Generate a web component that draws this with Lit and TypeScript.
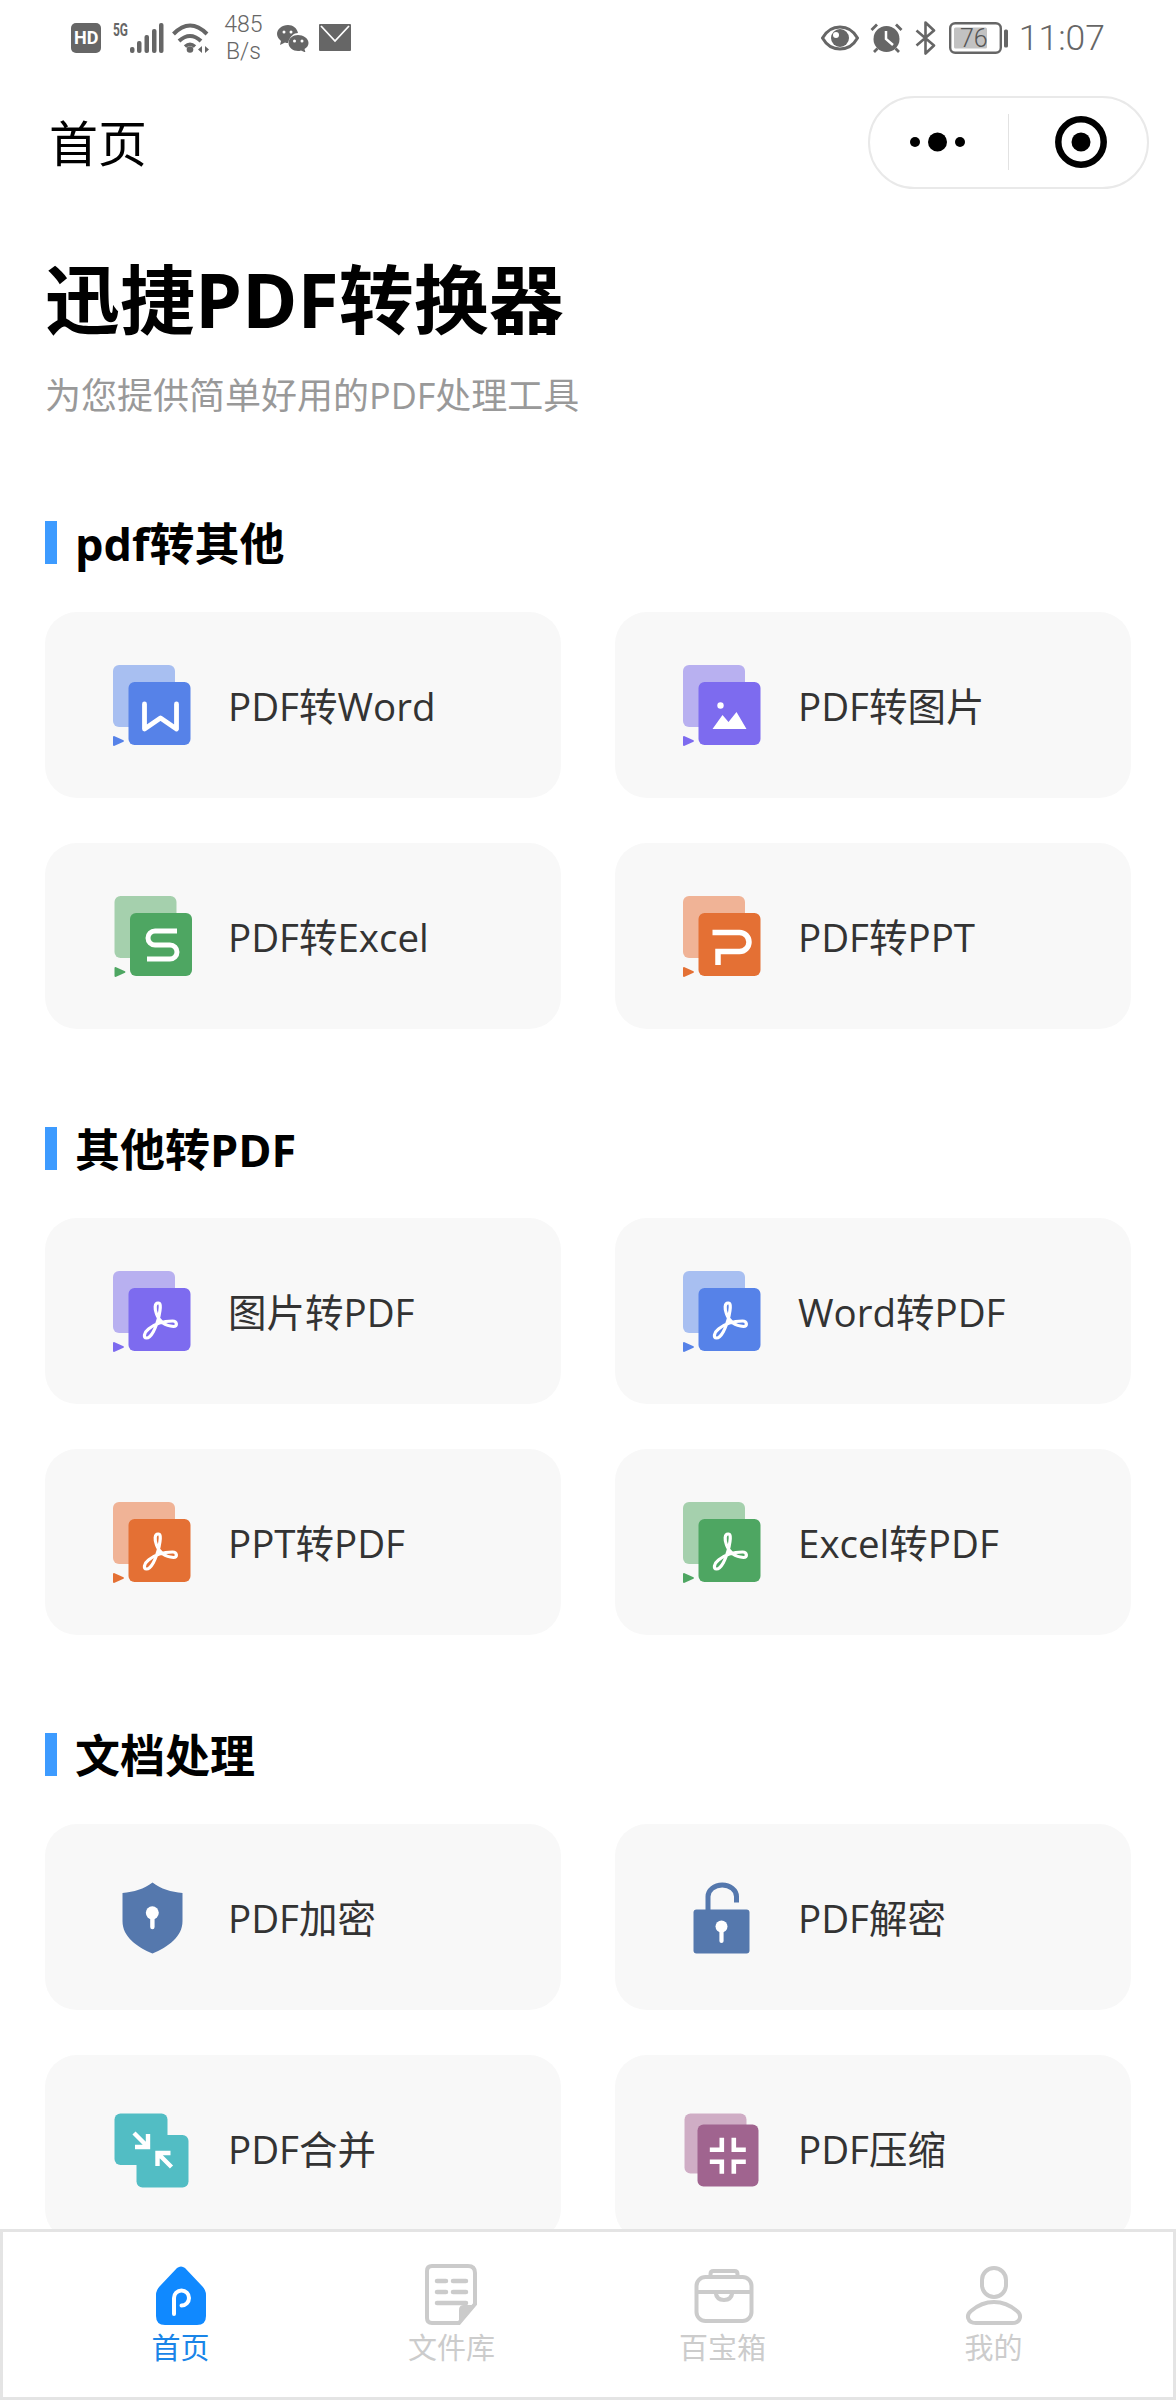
import { LitElement, html, css, svg } from "lit";
import { customElement } from "lit/decorators.js";

const PAL: Record<string, [string, string]> = {
  blue: ["#5682e8", "#a8bff1"],
  purple: ["#7d6bef", "#b8b0f0"],
  green: ["#4ea662", "#a5d0ad"],
  orange: ["#e47034", "#f0b396"],
};

const GLYPH: Record<string, any> = {
  w: svg`<path d="M16 22V47L32 36L48 47V22" fill="none" stroke="#fff" stroke-width="4.800" stroke-linejoin="round" stroke-linecap="round"/>`,
  s: svg`<path d="M47 18H25a7 7 0 0 0 0 14H40a7 7 0 0 1 0 14H17" fill="none" stroke="#fff" stroke-width="5"/>`,
  p: svg`<path d="M14 19.500H41a9.500 9.500 0 0 1 0 19H19.500V52" fill="none" stroke="#fff" stroke-width="5.500"/>`,
  img: svg`<circle cx="22" cy="23.500" r="3.200" fill="#fff"/><path d="M14 47L24 33L30 40L38 30L48 47Z" fill="#fff"/>`,
  pdf: svg`<path d="M29.500 15c-3.500 0-3.500 6-1.500 11c3 8 8 12 17 12.500c4.500 0 3.500-5.500-1-5.500c-9 0-18 3-24 8c-4.500 3.500-5.500 9-2 9c4.500 0 9.500-9.500 12.500-22c1-5 2.500-13-.5-13Z" fill="none" stroke="#fff" stroke-width="3.200" stroke-linejoin="round"/>`,
};

function stacked(color: string, glyph: string, dx = 0) {
  const [front, back] = PAL[color];
  return html`<svg class="ic" width="80" height="82" viewBox="${-dx} 0 80 82">
    <rect x="0" y="0" width="62" height="62" rx="6" fill=${back}/>
    <path d="M1 71L10.500 75.200Q11.500 76 10.500 76.800L1 81Q0 81 0 80V72Q0 71 1 71Z" fill=${front}/>
    <g transform="translate(15.500 17)"><rect width="62" height="63" rx="6" fill=${front}/>${GLYPH[glyph]}</g>
  </svg>`;
}

const shield = html`<svg class="ic" width="80" height="82" viewBox="0 0 80 82">
  <path d="M39.500 5.500C48 12 58 15 69.500 16V44C69.500 60 55 70 39.500 76.500C24 70 9.500 60 9.500 44V16C21 15 31 12 39.500 5.500Z" fill="#5578ad"/>
  <circle cx="39.300" cy="35.800" r="6.500" fill="#fff"/><path d="M39.400 38V50" stroke="#fff" stroke-width="4.400" stroke-linecap="round"/>
</svg>`;
const lock = html`<svg class="ic" width="80" height="82" viewBox="0 0 80 82">
  <path d="M25 34V19.500A14.250 11.500 0 0 1 53.500 19.500V25.500" fill="none" stroke="#5578ad" stroke-width="5"/>
  <rect x="10.500" y="32.500" width="56" height="44" rx="3" fill="#5578ad"/>
  <circle cx="38.500" cy="49.500" r="6" fill="#fff"/><path d="M38.500 52V64" stroke="#fff" stroke-width="4.200" stroke-linecap="round"/>
</svg>`;
const merge = html`<svg class="ic" width="80" height="82" viewBox="0 0 80 82">
  <rect x="1.500" y="5.500" width="53" height="51.500" rx="6" fill="#52bdc4"/>
  <rect x="23.500" y="27" width="52" height="52.500" rx="6" fill="#52bdc4"/>
  <path d="M21 25L35 39M35 26V39H22" fill="none" stroke="#fff" stroke-width="4.400"/>
  <path d="M58.500 59L44.500 45M44.500 58V45H57.500" fill="none" stroke="#fff" stroke-width="4.400"/>
</svg>`;
const cx = 44.8, cy = 47.8;
const compress = html`<svg class="ic" width="80" height="82" viewBox="0 0 80 82">
  <rect x="1.500" y="5.500" width="62" height="60" rx="6" fill="#cfadc5"/>
  <rect x="14.500" y="16.500" width="61" height="62" rx="6" fill="#a0648f"/>
  <path d="M${cx - 18} ${cy - 6}H${cx - 6}V${cy - 18}M${cx + 18} ${cy - 6}H${cx + 6}V${cy - 18}M${cx - 18} ${cy + 6}H${cx - 6}V${cy + 18}M${cx + 18} ${cy + 6}H${cx + 6}V${cy + 18}" fill="none" stroke="#fff" stroke-width="4.600"/>
</svg>`;

const SECTIONS = [
  { title: "pdf转其他", items: [
    { label: "PDF转Word", icon: stacked("blue", "w") },
    { label: "PDF转图片", icon: stacked("purple", "img") },
    { label: "PDF转Excel", icon: stacked("green", "s", 1.5) },
    { label: "PDF转PPT", icon: stacked("orange", "p") },
  ]},
  { title: "其他转PDF", items: [
    { label: "图片转PDF", icon: stacked("purple", "pdf") },
    { label: "Word转PDF", icon: stacked("blue", "pdf") },
    { label: "PPT转PDF", icon: stacked("orange", "pdf") },
    { label: "Excel转PDF", icon: stacked("green", "pdf") },
  ]},
  { title: "文档处理", items: [
    { label: "PDF加密", icon: shield },
    { label: "PDF解密", icon: lock },
    { label: "PDF合并", icon: merge },
    { label: "PDF压缩", icon: compress },
  ]},
];

const GRAY = "#cbcbcb";
const TABS = [
  { label: "首页", active: true, icon: html`<svg width="62" height="62" viewBox="0 0 62 62">
    <path d="M27 4Q31 1 35 4L52 22Q56 26 56 31V52Q56 61 47 61H15Q6 61 6 52V31Q6 26 10 22Z" fill="#1089ff"/>
    <path d="M24 50V34a7.500 7.500 0 1 1 7.500 7.500" fill="none" stroke="#fff" stroke-width="4" stroke-linecap="round"/>
  </svg>` },
  { label: "文件库", icon: html`<svg width="62" height="62" viewBox="0 0 62 62">
    <path d="M11 2H47Q54 2 54 9V40L38 59H11Q6 59 6 54V7Q6 2 11 2Z" fill="none" stroke="${GRAY}" stroke-width="4"/>
    <path d="M38 59V46Q38 41 43 41H54Z" fill="${GRAY}"/>
    <path d="M16 17H25M32 17H45M16 28H25M32 28H45M16 39H45" stroke="${GRAY}" stroke-width="4.500" stroke-linecap="round"/>
  </svg>` },
  { label: "百宝箱", icon: html`<svg width="62" height="62" viewBox="-1.500 0 62 62">
    <rect x="3" y="13" width="55" height="44" rx="9" fill="none" stroke="${GRAY}" stroke-width="4"/>
    <path d="M17 13V10Q17 7 20 7H41Q44 7 44 10V13M3 28H58M22 28Q23 36 30.500 36Q38 36 39 28" fill="none" stroke="${GRAY}" stroke-width="4"/>
  </svg>` },
  { label: "我的", icon: html`<svg width="62" height="62" viewBox="0 0 62 62">
    <rect x="19" y="4" width="24" height="29" rx="12" fill="none" stroke="${GRAY}" stroke-width="4"/>
    <path d="M13 59H49C58 59 59 51 54 47C47 41 39 38 31 38C23 38 15 41 8 47C3 51 4 59 13 59Z" fill="none" stroke="${GRAY}" stroke-width="4"/>
  </svg>` },
];

@customElement("app-root")
export class AppRoot extends LitElement {
  static styles = css`
    :host { display: block; position: relative; width: 1176px; height: 2400px; overflow: hidden; background: #fff;
      font-family: "Open Sans", "Noto Sans CJK SC", sans-serif; color: #000; }
    svg { display: block; flex: none; }
    .status { box-sizing: border-box; height: 72px; display: flex; justify-content: space-between; align-items: center; padding: 3px 71px 0 71px; color: #666; font-family: "Roboto", sans-serif; }
    .group { display: flex; align-items: center; }
    .hd { padding: 0 3px; background: #666; color: #fff; border-radius: 5px; font-size: 18px; font-weight: 700; line-height: 30px; }
    .sig { margin-left: 12px; }
    .wifi { margin-left: 8px; }
    .speed { width: 42px; margin-left: 12px; text-align: center; font-size: 23px; line-height: 27px; font-weight: 300; }
    .wechat { margin-left: 13px; }
    .mail { margin-left: 10px; }
    .alarm { margin-left: 11px; }
    .bt { margin-left: 12px; }
    .batt { margin-left: 13px; }
    .time { margin-left: 11px; font-size: 35.5px; font-weight: 300; line-height: 44px; }
    .nav { height: 140px; display: flex; align-items: center; justify-content: space-between; padding: 0 27px 0 49px; }
    .nav-title { font-size: 49px; line-height: 60px; padding-top: 1px; }
    .capsule { box-sizing: border-box; width: 281px; height: 93px; border: 2px solid #e9e9e9; border-radius: 47px; display: flex; align-items: center; }
    .cap-l { width: 138px; display: flex; justify-content: center; }
    .cap-d { width: 1px; height: 56px; background: #e2e2e2; }
    .cap-r { flex: 1; display: flex; justify-content: center; padding-left: 5px; }
    main { padding: 0 45px; }
    h1 { margin: 42px 0 0; font-size: 75px; line-height: 90px; font-weight: 700; }
    .sub { margin: 26.5px 0 0; padding-bottom: 2px; font-size: 36px; line-height: 50px; color: #999; }
    section { margin-top: 98px; }
    .sec-title { display: flex; align-items: center; gap: 18px; height: 44px; font-size: 45px; font-weight: 700; line-height: 44px; }
    .sec-title::before { content: ""; width: 12px; height: 43px; background: #3d9bff; }
    .sec-text { padding-top: 2px; }
    .grid { margin-top: 47px; display: grid; grid-template-columns: 516px 516px; column-gap: 54px; row-gap: 45px; }
    .card { box-sizing: border-box; height: 186px; background: #f8f8f8; border-radius: 32px; display: flex; align-items: center; padding: 2px 0 0 68px; }
    .card-label { margin-left: 35px; font-size: 38.5px; line-height: 50px; color: #333; }
    .tabbar { position: absolute; left: 0; right: 0; bottom: 0; height: 171px; box-sizing: border-box; border: 3px solid #e4e4e4; background: #fff; padding: 32px 0 0 42px; display: grid; grid-template-columns: repeat(4, 271px); }
    .tab { display: flex; flex-direction: column; align-items: center; color: #ccc; }
    .tab.on { color: #1a85e8; }
    .tab-label { margin-top: 2px; font-size: 29px; line-height: 40px; }
  `;

  render() {
    return html`
      <div class="status">
        <div class="group">
          <div class="hd">HD</div>
          <svg class="sig" width="51" height="44" viewBox="112 14 51 44">
            <text x="112" y="34" font-family="Roboto, sans-serif" font-size="18" font-weight="700" fill="#666" textLength="15" lengthAdjust="spacingAndGlyphs">5G</text>
            <rect x="129" y="45" width="4.500" height="6" rx="2" fill="#666"/><rect x="136" y="39" width="4.500" height="12" rx="2" fill="#666"/><rect x="143.500" y="33" width="4.500" height="18" rx="2" fill="#666"/><rect x="151" y="27" width="4.500" height="24" rx="2" fill="#666"/><rect x="158" y="21" width="4.500" height="30" rx="2" fill="#666"/>
          </svg>
          <svg class="wifi" width="38" height="34" viewBox="171 19 38 34">
            <path d="M172.500 32Q189 15 206 32M178 39Q189 29 200 39" fill="none" stroke="#666" stroke-width="4"/><path d="M184 44.500Q189 40 194 44.500" fill="none" stroke="#666" stroke-width="3.500"/>
            <circle cx="189" cy="47.500" r="3.300" fill="#666"/><path d="M201 44V51L197 47.500ZM204 44V51L208 47.500Z" fill="#666"/>
          </svg>
          <div class="speed">485<br />B/s</div>
          <svg class="wechat" width="32" height="28" viewBox="0 0 32 28">
            <path d="M11 1C5 1 0 5 0 10C0 13 2 15 4 17L3 21L8 18.500C9 19 10 19 11 19C13 12 17 9 21 9C20 4 16 1 11 1Z" fill="#666"/>
            <path d="M21 11C16 11 11.500 14 11.500 19C11.500 23.500 16 27 21 27C22 27 23 27 24 26.500L28.500 28.500L27.500 25C30 23.500 31.500 21.500 31.500 19C31.500 14 26 11 21 11Z" fill="#666"/>
            <circle cx="7" cy="8" r="1.500" fill="#fff"/><circle cx="14" cy="8" r="1.500" fill="#fff"/><circle cx="17.500" cy="17" r="1.500" fill="#fff"/><circle cx="25" cy="17" r="1.500" fill="#fff"/>
          </svg>
          <svg class="mail" width="32" height="27" viewBox="0 0 32 27">
            <rect width="32" height="27" rx="1" fill="#666"/><path d="M2 2L16 17L30 2" fill="none" stroke="#fff" stroke-width="1.800"/>
          </svg>
        </div>
        <div class="group">
          <svg width="38" height="26" viewBox="0 0 38 26">
            <path d="M1.500 13C6 5 12 2 19 2S32 5 36.500 13C32 21 26 24 19 24S6 21 1.500 13Z" fill="none" stroke="#666" stroke-width="3"/>
            <circle cx="19" cy="13" r="9" fill="#666"/><circle cx="15" cy="10" r="3" fill="#fff"/>
          </svg>
          <svg class="alarm" width="33" height="32" viewBox="0 0 33 32">
            <circle cx="16.500" cy="17" r="13" fill="#666"/>
            <path d="M16 9V17L23 23" fill="none" stroke="#fff" stroke-width="2.500"/>
            <path d="M1.500 8L7 2.500M31.500 8L26 2.500M4 30L7.500 26.500M29 30L25.500 26.500" stroke="#666" stroke-width="2.800"/>
          </svg>
          <svg class="bt" width="21" height="34" viewBox="0 0 21 34">
            <path d="M1.500 9.500L19 24.500L10.500 32.500V1.500L19 9.500L1.500 24.500" fill="none" stroke="#666" stroke-width="2.600" stroke-linejoin="round"/>
          </svg>
          <svg class="batt" width="59" height="32" viewBox="0 0 59 32">
            <rect x="1.200" y="1.200" width="50.600" height="29.600" rx="5" fill="none" stroke="#666" stroke-width="2.400"/>
            <rect x="5" y="5.500" width="33" height="21" rx="1.500" fill="#c2c2c2"/>
            <rect x="55" y="7.500" width="4" height="18" rx="1.500" fill="#666"/>
            <text x="11" y="25" font-family="Roboto, sans-serif" font-size="25" font-weight="300" fill="#555">76</text>
          </svg>
          <div class="time">11:07</div>
        </div>
      </div>
      <div class="nav">
        <div class="nav-title">首页</div>
        <div class="capsule">
          <div class="cap-l">
            <svg width="58" height="20" viewBox="0 0 58 20"><circle cx="5" cy="10" r="5" fill="#000"/><circle cx="27.500" cy="10" r="9.500" fill="#000"/><circle cx="50" cy="10" r="5" fill="#000"/></svg>
          </div>
          <div class="cap-d"></div>
          <div class="cap-r">
            <svg width="52" height="52" viewBox="0 0 52 52"><circle cx="26" cy="26" r="22.700" fill="none" stroke="#000" stroke-width="6.500"/><circle cx="26" cy="26" r="9.500" fill="#000"/></svg>
          </div>
        </div>
      </div>
      <main>
        <h1>迅捷PDF转换器</h1>
        <div class="sub">为您提供简单好用的PDF处理工具</div>
        ${SECTIONS.map((s) => html`
          <section>
            <div class="sec-title"><span class="sec-text">${s.title}</span></div>
            <div class="grid">
              ${s.items.map((it) => html`<div class="card">${it.icon}<span class="card-label">${it.label}</span></div>`)}
            </div>
          </section>
        `)}
      </main>
      <div class="tabbar">
        ${TABS.map((t) => html`<div class="tab ${t.active ? "on" : ""}">${t.icon}<div class="tab-label">${t.label}</div></div>`)}
      </div>
    `;
  }
}
